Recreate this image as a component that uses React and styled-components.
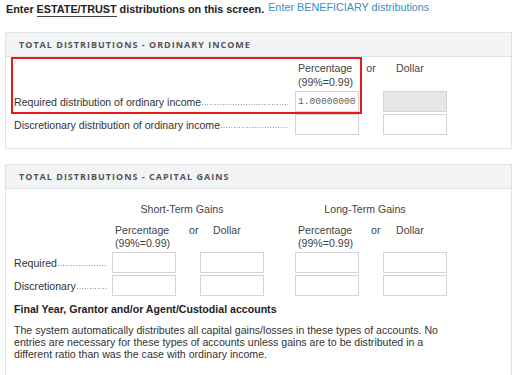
import React from "react";
import styled, { createGlobalStyle } from "styled-components";

const GlobalStyle = createGlobalStyle`
  html, body {
    margin: 0;
    padding: 0;
    background: #ffffff;
  }
  body {
    font-family: "Liberation Sans", Arial, sans-serif;
    color: #333;
  }
`;

const Page = styled.div`
  width: 517px;
  box-sizing: border-box;
  padding: 2px 5px 0 5px;
`;

const Intro = styled.div`
  height: 14px;
  padding-left: 1px;
  font-size: 10.8px;
  line-height: 14px;
  font-weight: bold;
  color: #222;
  margin-bottom: 16px;
  white-space: nowrap;
`;

const Current = styled.span`
  border-bottom: 1px solid #444;
  padding-bottom: 1px;
`;

const Link = styled.a`
  font-weight: normal;
  color: #3a8dc8;
  text-decoration: none;
  vertical-align: 2px;
  line-height: 10px;
  margin-left: 4px;
  cursor: pointer;
`;

const Panel = styled.section`
  border: 1px solid #e1e2e4;
  margin-bottom: 15px;
`;

const PanelHeader = styled.h3`
  margin: 0;
  height: 23px;
  line-height: 23px;
  padding-left: 13px;
  background: #f3f4f6;
  border-bottom: 1px solid #e1e2e4;
  font-family: "Open Sans", "Liberation Sans", sans-serif;
  font-size: 9px;
  font-weight: bold;
  letter-spacing: 1px;
  color: #555;
`;

const Body = styled.div`
  padding: ${(p) => p.$pad};
  font-size: 10.6px;
`;

const Grid = styled.div`
  display: grid;
  grid-template-columns: ${(p) => p.$cols};
  row-gap: 2px;
  align-items: center;
`;

const Highlight = styled.div`
  grid-column: 1 / 3;
  grid-row: 1 / 3;
  align-self: stretch;
  margin: -4px -3px -2px -3px;
  border: 2px solid #e51b1b;
  pointer-events: none;
`;

const HeadCell = styled.div`
  grid-column: ${(p) => p.$col};
  grid-row: ${(p) => p.$row};
  align-self: start;
  line-height: ${(p) => (p.$tight ? "13px" : "14px")};
  padding-left: ${(p) => p.$indent || "0"};
  text-align: ${(p) => p.$align || "left"};
  color: #444;
  white-space: nowrap;
`;

const GroupTitle = styled.div`
  grid-column: ${(p) => p.$col};
  grid-row: 1;
  line-height: 14px;
  margin-bottom: 6px;
  padding-right: 12px;
  text-align: center;
  color: #444;
`;

const Label = styled.div`
  grid-column: 1;
  grid-row: ${(p) => p.$row};
  display: flex;
  align-items: baseline;
  white-space: nowrap;
  color: #333;
`;

const Leader = styled.span`
  flex: 1;
  align-self: flex-end;
  height: 1px;
  margin: 0 ${(p) => p.$gap || "6px"} 3px 1px;
  background: linear-gradient(to right, #8a8a8a 1px, transparent 1px) repeat-x
    left bottom / 2.6px 1px;
`;

const Field = styled.input`
  grid-column: ${(p) => p.$col};
  grid-row: ${(p) => p.$row};
  box-sizing: border-box;
  width: 64px;
  height: 21px;
  margin: 0;
  padding: 0 1px 0 2px;
  border: 1px solid #d4d4d4;
  background: ${(p) => (p.disabled ? "#e7e7e7" : "#fff")};
  font-family: "Liberation Mono", "Courier New", monospace;
  font-size: 9.6px;
  color: #666;
  outline: none;
`;

const NoteTitle = styled.div`
  margin-top: 6px;
  line-height: 14px;
  font-weight: bold;
  color: #222;
`;

const Note = styled.p`
  margin: 8px 0 0;
  max-width: 450px;
  line-height: 12px;
  color: #333;
`;

const Row = ({ row, label, gap }) => (
  <Label $row={row}>
    <span>{label}</span>
    <Leader $gap={gap} />
  </Label>
);

const Choice = ({ first, row, tight, orAlign, orIndent }) => (
  <>
    <HeadCell $col={first} $row={row} $indent="3px" $tight={tight}>
      Percentage
      <br />
      (99%=0.99)
    </HeadCell>
    <HeadCell
      $col={first + 1}
      $row={row}
      $align={orAlign}
      $indent={orIndent}
      $tight={tight}
    >
      or
    </HeadCell>
    <HeadCell $col={first + 2} $row={row} $indent="13px" $tight={tight}>
      Dollar
    </HeadCell>
  </>
);

export default function App() {
  return (
    <Page>
      <GlobalStyle />
      <Intro>
        Enter <Current>ESTATE/TRUST</Current> distributions on this screen.
        <Link>Enter BENEFICIARY distributions</Link>
      </Intro>

      <Panel>
        <PanelHeader>TOTAL DISTRIBUTIONS - ORDINARY INCOME</PanelHeader>
        <Body $pad="4px 8px 13px 8px">
          <Grid $cols="281px 64px 24px 64px">
            <Choice first={2} row={1} orAlign="center" />
            <Row row={2} label="Required distribution of ordinary income" gap="7px" />
            <Field $col={2} $row={2} readOnly defaultValue="1.00000000" />
            <Field $col={4} $row={2} disabled />
            <Row row={3} label="Discretionary distribution of ordinary income" gap="7px" />
            <Field $col={2} $row={3} />
            <Field $col={4} $row={3} />
            <Highlight />
          </Grid>
        </Body>
      </Panel>

      <Panel>
        <PanelHeader>TOTAL DISTRIBUTIONS - CAPITAL GAINS</PanelHeader>
        <Body $pad="13px 8px 30px 8px">
          <Grid $cols="98px 64px 24px 64px 31px 64px 24px 64px">
            <GroupTitle $col="2 / 5">Short-Term Gains</GroupTitle>
            <GroupTitle $col="6 / 9">Long-Term Gains</GroupTitle>
            <Choice first={2} row={2} tight orIndent="13px" />
            <Choice first={6} row={2} tight orIndent="12px" />
            <Row row={3} label="Required" gap="5px" />
            <Field $col={2} $row={3} />
            <Field $col={4} $row={3} />
            <Field $col={6} $row={3} />
            <Field $col={8} $row={3} />
            <Row row={4} label="Discretionary" gap="5px" />
            <Field $col={2} $row={4} />
            <Field $col={4} $row={4} />
            <Field $col={6} $row={4} />
            <Field $col={8} $row={4} />
          </Grid>
          <NoteTitle>Final Year, Grantor and/or Agent/Custodial accounts</NoteTitle>
          <Note>
            The system automatically distributes all capital gains/losses in these
            types of accounts. No entries are necessary for these types of accounts
            unless gains are to be distributed in a different ratio than was the
            case with ordinary income.
          </Note>
        </Body>
      </Panel>
    </Page>
  );
}
